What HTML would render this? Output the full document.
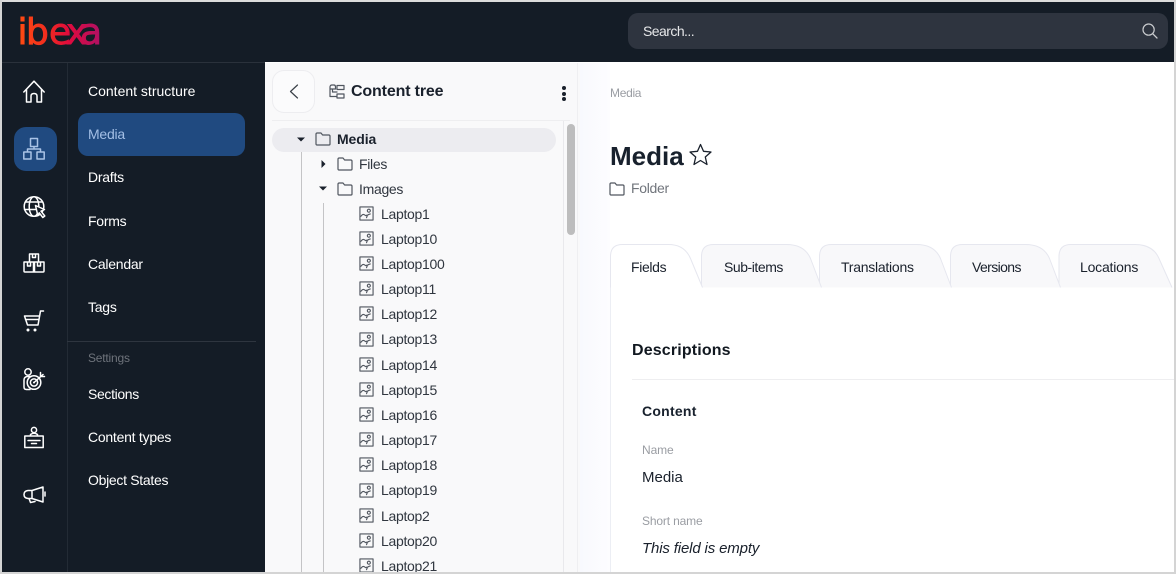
<!DOCTYPE html>
<html lang="en"><head><meta charset="utf-8"><title>Media</title>
<style>
html,body{margin:0;padding:0}
body{width:1176px;height:574px;position:relative;overflow:hidden;background:#fff;font-family:"Liberation Sans","Noto Sans CJK SC",sans-serif;font-size:14px;color:#1a212c}
.a{position:absolute}
.t{position:absolute;white-space:nowrap;line-height:20px;height:20px}
.n{color:#fff;left:88px;font-size:14px;letter-spacing:-.25px}
.r{font-size:14px;color:#30363f;letter-spacing:-.3px}
svg{position:absolute;overflow:visible}
.i{fill:none;stroke:#fff;stroke-width:1.5;stroke-linecap:round;stroke-linejoin:round}
.f{fill:none;stroke:#50565f;stroke-width:1.2;stroke-linejoin:round;stroke-linecap:round}
.tab{fill:#f8f8fa;stroke:#e6e7ef;stroke-width:1}
.tl{letter-spacing:-.35px}
</style></head><body>
<svg width="0" height="0" style="position:absolute"><defs>
<linearGradient id="lg" gradientUnits="userSpaceOnUse" x1="20" y1="0" x2="102" y2="0"><stop offset="0" stop-color="#ff4a12"/><stop offset=".35" stop-color="#f02a20"/><stop offset=".6" stop-color="#e00a3e"/><stop offset="1" stop-color="#ad1166"/></linearGradient>
<symbol id="fold" viewBox="0 0 16 14"><path class="f" d="M1 12V2.200Q1 1 2.200 1H6L7.600 3H13.800Q15 3 15 4.200V12Q15 13 14 13H2Q1 13 1 12Z"/></symbol>
<symbol id="img" viewBox="0 0 16 16"><path class="f" d="M1 1H15V15H1Z M2 11Q4 8 6 9.500T9 10Q10 9 12 8.500 M8.500 9.500Q9 11 8 12.500"/><circle class="f" cx="10.500" cy="5" r="1.600"/></symbol>
</defs></svg>

<!-- dark chrome -->
<div class="a" style="left:0;top:0;width:265px;height:574px;background:#141c26"></div>
<div class="a" style="left:0;top:0;width:1176px;height:62px;background:#141c26"></div>
<div class="a" style="left:0;top:62px;width:265px;height:1px;background:#2a313b"></div>
<div class="a" style="left:67px;top:63px;width:1px;height:511px;background:#232b35"></div>
<div class="a" style="left:67px;top:341px;width:189px;height:1px;background:#2e353f"></div>

<!-- logo -->
<svg style="left:0;top:0" width="120" height="60"><text x="17.500 26 49 66 80" y="44" font-family="'DejaVu Sans',sans-serif" font-size="36" fill="url(#lg)" stroke="url(#lg)" stroke-width=".9">ibexa</text></svg>

<!-- search -->
<div class="a" style="left:628px;top:13px;width:540px;height:36px;background:#2e343f;border-radius:10px"></div>
<div class="t" style="left:643px;top:21px;color:#e6e7e9;letter-spacing:-.55px">Search...</div>
<svg style="left:1142px;top:23px" width="16" height="16"><circle cx="6.600" cy="6.600" r="5.600" fill="none" stroke="#c9cbce" stroke-width="1.200"/><path d="M10.800 10.800L15 15" stroke="#c9cbce" stroke-width="1.300" stroke-linecap="round"/></svg>

<!-- icon rail -->
<div class="a" style="left:14px;top:127px;width:43px;height:44px;background:#204a80;border-radius:12px"></div>
<svg style="left:23px;top:80px" width="22" height="23"><path class="i" d="M.800 12L11 1.200L21.200 12 M3.500 9V22H8V16Q8 13.500 11 13.500T14 16V22H18.500V9"/></svg>
<svg style="left:23px;top:138px" width="22" height="22"><path class="i" style="stroke:#a9c3e6" d="M7.500 .500H14.500V8.500H7.500Z M.800 14H8V21H.800Z M14 14H21.200V21H14Z M11 8.500V11 M4.500 14V11H17.500V14"/></svg>
<svg style="left:23px;top:196px" width="22" height="22"><circle class="i" cx="11" cy="10.500" r="9.800"/><ellipse class="i" cx="11" cy="10.500" rx="4.800" ry="9.800"/><path class="i" d="M2.300 6H19.700 M1.500 13.500H20.500"/><path d="M12.500 9.500L21.500 13.500L18 15.200L21.800 20L19.800 21.500L16.200 16.800L14.800 19.500Z" fill="#141c26" stroke="#fff" stroke-width="1.500" stroke-linejoin="round"/></svg>
<svg style="left:23px;top:253px" width="22" height="20"><path class="i" d="M6.500 1H15.500V9H6.500Z M9.500 1V4.500H12.500V1 M1 9H10.500V19H2Q1 19 1 18Z M11.500 9H21V18Q21 19 20 19H11.500Z M4.500 9V13H7.500V9 M14.500 9V13H17.500V9"/></svg>
<svg style="left:24px;top:310px" width="20" height="22"><path class="i" d="M19.500 1H16.500L14 15H3.500L.500 6H15.500 M1.500 9.500H14.800"/><circle cx="4" cy="20" r="1.500" fill="#fff"/><circle cx="11" cy="20" r="1.500" fill="#fff"/></svg>
<svg style="left:23px;top:368px" width="22" height="24"><circle class="i" cx="5" cy="4" r="3.200"/><path class="i" d="M7 21.500H3.500Q1 21.500 1 19V12Q1 8.500 5 8.500H8"/><circle class="i" cx="11" cy="14.500" r="6.800"/><circle class="i" cx="11" cy="14.500" r="3.600"/><circle cx="11" cy="14.500" r="1" fill="#fff"/><path class="i" d="M11 14.500L20 6.500 M17.500 4.500V8.500H21.500"/></svg>
<svg style="left:24px;top:426px" width="20" height="23"><circle class="i" cx="10" cy="4" r="2.600"/><path class="i" d="M6.500 10V8.500Q10 6 13.500 8.500V10 M.800 10H19.200V21.500H.800Z M4 14.500H16 M7.500 17.500H12.500"/></svg>
<svg style="left:23px;top:483px" width="22" height="22"><path class="i" d="M20 4V19L9 15.500H5Q1 15 1 11.500T5 7.500H9Z M9 7.500V15.500 M6 15.500L7.500 19.500L12 18.500"/><path d="M21.800 9V13" stroke="#fff" stroke-width="1.500" stroke-linecap="round" transform="translate(.2 0)"/></svg>

<!-- nav -->
<div class="a" style="left:78px;top:113px;width:167px;height:43px;background:#204a80;border-radius:10px"></div>
<div class="t n" style="top:81px;letter-spacing:0">Content structure</div>
<div class="t n" style="top:124px;color:#a3bfe5">Media</div>
<div class="t n" style="top:167px">Drafts</div>
<div class="t n" style="top:211px">Forms</div>
<div class="t n" style="top:254px">Calendar</div>
<div class="t n" style="top:297px">Tags</div>
<div class="t" style="left:88px;top:348px;font-size:12px;color:#6e737b;letter-spacing:-.2px">Settings</div>
<div class="t n" style="top:384px;letter-spacing:-.35px">Sections</div>
<div class="t n" style="top:427px">Content types</div>
<div class="t n" style="top:470px;letter-spacing:-.3px">Object States</div>

<!-- tree panel -->
<div class="a" style="left:265px;top:63px;width:315px;height:511px;background:#f9f9fa"></div>
<div class="a" style="left:272px;top:70px;width:41px;height:41px;border:1px solid #ededf0;border-radius:12px;background:#fbfbfc"></div>
<svg style="left:289px;top:84px" width="10" height="15"><path d="M8.500 1L1.500 7.500L8.500 14" fill="none" stroke="#3a4048" stroke-width="1.200" stroke-linecap="round" stroke-linejoin="round"/></svg>
<svg style="left:329px;top:84px" width="16" height="15"><path class="f" d="M1 3Q1 1 3 1H5Q6.500 1 6.500 3V5H1Z M1 5V12.500H8 M8 1.500H15V5.500H8Z M8 10H15V14H8Z M3.500 5V8H8"/></svg>
<div class="t" style="left:351px;top:82px;font-size:16px;font-weight:700;color:#1a212c;letter-spacing:-.15px">Content tree</div>
<div class="a" style="left:562px;top:86px;width:4px;height:4px;border-radius:50%;background:#1a212c"></div>
<div class="a" style="left:562px;top:91.500px;width:4px;height:4px;border-radius:50%;background:#1a212c"></div>
<div class="a" style="left:562px;top:97px;width:4px;height:4px;border-radius:50%;background:#1a212c"></div>
<div class="a" style="left:272px;top:120px;width:298px;height:1px;background:#eeeef0"></div>
<div class="a" style="left:272px;top:128px;width:284px;height:24px;background:#ececf0;border-radius:12px"></div>
<div class="a" style="left:563px;top:121px;width:1px;height:453px;background:#e9e9ec"></div>
<div class="a" style="left:577px;top:63px;width:1px;height:511px;background:#efeff1"></div>
<div class="a" style="left:567px;top:124px;width:8px;height:111px;background:#bdbdbd;border-radius:4px"></div>
<div class="a" style="left:301px;top:152px;width:1px;height:422px;background:#c4c4c6"></div>
<div class="a" style="left:323px;top:203px;width:1px;height:371px;background:#c4c4c6"></div>

<svg style="left:297px;top:137px" width="8" height="5"><path d="M0 .5H8L4 4.500Z" fill="#1a212c"/></svg>
<svg style="left:321px;top:160px" width="5" height="8"><path d="M.5 0V8L4.500 4Z" fill="#1a212c"/></svg>
<svg style="left:319px;top:186px" width="8" height="5"><path d="M0 .5H8L4 4.500Z" fill="#1a212c"/></svg>

<svg style="left:315px;top:132px" width="16" height="14"><use href="#fold"/></svg>
<svg style="left:337px;top:157px" width="16" height="14"><use href="#fold"/></svg>
<svg style="left:337px;top:182px" width="16" height="14"><use href="#fold"/></svg>
<div class="t" style="left:337px;top:129px;font-size:14px;font-weight:700;letter-spacing:-.1px">Media</div>
<div class="t r" style="left:359px;top:154px">Files</div>
<div class="t r" style="left:359px;top:179px">Images</div>

<svg style="left:359px;top:206px" width="15" height="15"><use href="#img"/></svg><div class="t r" style="left:381px;top:203.500px">Laptop1</div>
<svg style="left:359px;top:231px" width="15" height="15"><use href="#img"/></svg><div class="t r" style="left:381px;top:228.500px">Laptop10</div>
<svg style="left:359px;top:256px" width="15" height="15"><use href="#img"/></svg><div class="t r" style="left:381px;top:254px">Laptop100</div>
<svg style="left:359px;top:281px" width="15" height="15"><use href="#img"/></svg><div class="t r" style="left:381px;top:279px">Laptop11</div>
<svg style="left:359px;top:306px" width="15" height="15"><use href="#img"/></svg><div class="t r" style="left:381px;top:304px">Laptop12</div>
<svg style="left:359px;top:332px" width="15" height="15"><use href="#img"/></svg><div class="t r" style="left:381px;top:329px">Laptop13</div>
<svg style="left:359px;top:357px" width="15" height="15"><use href="#img"/></svg><div class="t r" style="left:381px;top:354.500px">Laptop14</div>
<svg style="left:359px;top:382px" width="15" height="15"><use href="#img"/></svg><div class="t r" style="left:381px;top:380px">Laptop15</div>
<svg style="left:359px;top:407px" width="15" height="15"><use href="#img"/></svg><div class="t r" style="left:381px;top:405px">Laptop16</div>
<svg style="left:359px;top:432px" width="15" height="15"><use href="#img"/></svg><div class="t r" style="left:381px;top:430px">Laptop17</div>
<svg style="left:359px;top:457px" width="15" height="15"><use href="#img"/></svg><div class="t r" style="left:381px;top:455px">Laptop18</div>
<svg style="left:359px;top:483px" width="15" height="15"><use href="#img"/></svg><div class="t r" style="left:381px;top:480px">Laptop19</div>
<svg style="left:359px;top:508px" width="15" height="15"><use href="#img"/></svg><div class="t r" style="left:381px;top:505.500px">Laptop2</div>
<svg style="left:359px;top:533px" width="15" height="15"><use href="#img"/></svg><div class="t r" style="left:381px;top:530.500px">Laptop20</div>
<svg style="left:359px;top:558px" width="15" height="15"><use href="#img"/></svg><div class="t r" style="left:381px;top:556px">Laptop21</div>

<!-- main -->
<div class="a" style="left:580px;top:63px;width:30px;height:511px;background:linear-gradient(90deg,#f8f9fe,#fdfdff)"></div>
<div class="a" style="left:610px;top:287px;width:564px;height:287px;background:#fff;border-left:1px solid #eceef4;box-sizing:border-box"></div>
<div class="t" style="left:610px;top:82.500px;font-size:12px;color:#9a9da3;letter-spacing:-.3px">Media</div>
<div class="t" style="left:610px;top:141px;height:30px;line-height:30px;font-size:26px;font-weight:700;color:#18212d">Media</div>
<svg style="left:689px;top:143px" width="23" height="23"><path d="M11.500 1.500L14.500 8.300L22 9L16.300 14L18 21.500L11.500 17.500L5 21.500L6.700 14L1 9L8.500 8.300Z" fill="none" stroke="#1a212c" stroke-width="1.300" stroke-linejoin="round"/></svg>
<svg style="left:609px;top:182px" width="16" height="14"><use href="#fold"/></svg>
<div class="t" style="left:631px;top:178px;color:#71757c;letter-spacing:-.3px">Folder</div>

<!-- tabs -->
<svg style="left:0;top:0" width="1174" height="290">
<g transform="translate(1059 244.500)"><path class="tab" d="M0 43V12Q0 0 12 0H76Q94 0 100 14L113 43"/></g>
<g transform="translate(950.500 244.500)"><path class="tab" d="M0 43V12Q0 0 12 0H75Q93 0 99 14L110 43"/></g>
<g transform="translate(819.500 244.500)"><path class="tab" d="M0 43V12Q0 0 12 0H97Q115 0 121 14L132 43"/></g>
<g transform="translate(701.500 244.500)"><path class="tab" d="M0 43V12Q0 0 12 0H85Q103 0 109 14L120 43"/></g>
<g transform="translate(610.500 244.500)"><path d="M0 43V12Q0 0 12 0H58Q74 0 80 14L92 43" fill="#fff" stroke="#e6e7ef"/></g>
</svg>
<div class="t tl" style="left:631px;top:256.500px">Fields</div>
<div class="t tl" style="left:724px;top:256.500px;letter-spacing:-.45px">Sub-items</div>
<div class="t tl" style="left:841px;top:256.500px;letter-spacing:-.25px">Translations</div>
<div class="t tl" style="left:972px;top:256.500px;letter-spacing:-.6px">Versions</div>
<div class="t tl" style="left:1080px;top:256.500px;letter-spacing:-.2px">Locations</div>

<div class="t" style="left:632px;top:341px;font-size:16px;font-weight:700;color:#111820;letter-spacing:.15px">Descriptions</div>
<div class="a" style="left:632px;top:379px;width:542px;height:1px;background:#eeeef0"></div>
<div class="t" style="left:642px;top:401px;font-size:14px;font-weight:700;color:#18212d;letter-spacing:.25px">Content</div>
<div class="t" style="left:642px;top:440px;font-size:12px;color:#9a9da3;letter-spacing:-.1px">Name</div>
<div class="t" style="left:642px;top:467.500px;font-size:15px;color:#1a212c">Media</div>
<div class="t" style="left:642px;top:511px;font-size:12px;color:#9a9da3;letter-spacing:-.15px">Short name</div>
<div class="t" style="left:642px;top:538.500px;font-size:15px;font-style:italic;color:#1a212c;letter-spacing:-.15px">This field is empty</div>

<!-- frame -->
<div class="a" style="left:0;top:0;width:1176px;height:2px;background:#dcdcdc"></div>
<div class="a" style="left:0;top:572px;width:1176px;height:2px;background:#d4d4d4"></div>
<div class="a" style="left:0;top:0;width:2px;height:574px;background:#d4d4d4"></div>
<div class="a" style="left:1174px;top:0;width:2px;height:574px;background:#d4d4d4"></div>
</body></html>
